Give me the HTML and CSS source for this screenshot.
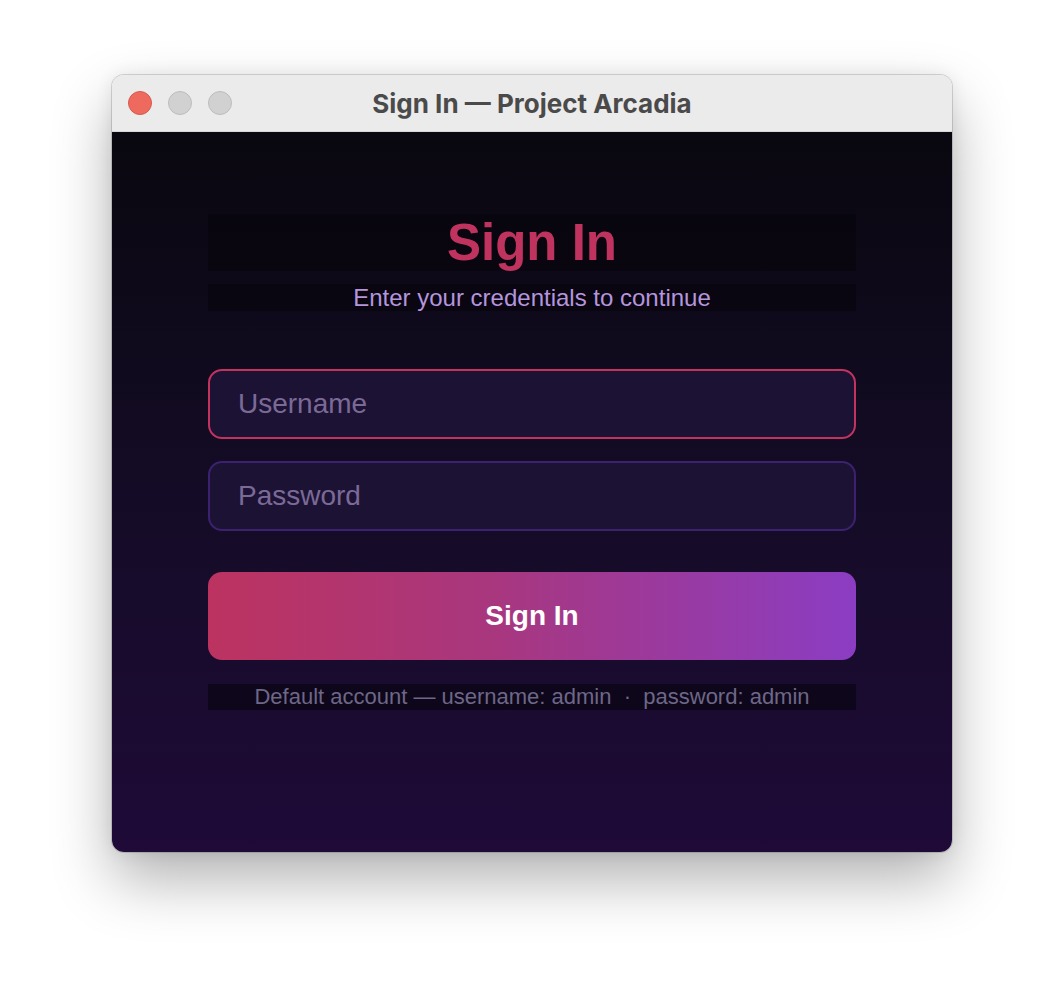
FILE: index.html
```html
<!DOCTYPE html>
<html lang="en">
<head>
<meta charset="utf-8">
<title>Sign In — Project Arcadia</title>
<link rel="stylesheet" href="styles.css">
</head>
<body>
<div class="window">
  <div class="titlebar">
    <div class="lights">
      <span class="light red"></span>
      <span class="light gray"></span>
      <span class="light gray"></span>
    </div>
    <div class="title">Sign In — Project Arcadia</div>
  </div>
  <div class="content">
    <div class="form">
      <h1 class="heading">Sign In</h1>
      <p class="subtitle">Enter your credentials to continue</p>
      <div class="fields">
        <input class="field focused" type="text" placeholder="Username">
        <input class="field" type="password" placeholder="Password">
      </div>
      <button class="submit" type="button">Sign In</button>
      <p class="hint">Default account — username: admin &nbsp;·&nbsp; password: admin</p>
    </div>
  </div>
</div>
</body>
</html>
```

FILE: styles.css
```css
html, body {
  margin: 0;
  padding: 0;
  background: #ffffff;
}
body {
  font-family: "Liberation Sans", Arial, sans-serif;
  min-height: 1000px;
  padding-top: 75px;
  box-sizing: border-box;
}
.window {
  width: 840px;
  margin: 0 auto;
  border-radius: 12px;
  overflow: hidden;
  box-shadow: 0 28px 60px rgba(0, 0, 0, 0.30), 0 0 18px rgba(0, 0, 0, 0.08), 0 0 0 1px rgba(0, 0, 0, 0.14);
}
.titlebar {
  height: 56px;
  background: #ebebeb;
  border-bottom: 1px solid #d8d8d8;
  display: flex;
  align-items: center;
  position: relative;
}
.lights {
  display: flex;
  gap: 16px;
  padding-left: 16px;
}
.light {
  width: 22px;
  height: 22px;
  border-radius: 50%;
  display: block;
}
.light.red {
  background: #ee6a5f;
  border: 1px solid #d6594f;
}
.light.gray {
  background: #d1d1d1;
  border: 1px solid #bdbdbd;
}
.title {
  position: absolute;
  left: 0;
  right: 0;
  text-align: center;
  font-family: Inter, "Liberation Sans", sans-serif;
  font-weight: 700;
  font-size: 26px;
  color: #4a4a4a;
  pointer-events: none;
}
.content {
  height: 720px;
  background: linear-gradient(180deg, #09070f 0%, #140c26 50%, #1f0a38 100%);
  padding-top: 82px;
  box-sizing: border-box;
}
.form {
  width: 648px;
  margin: 0 auto;
  display: flex;
  flex-direction: column;
}
.heading {
  margin: 0;
  font-size: 51px;
  line-height: 57px;
  font-weight: 700;
  color: #c0335f;
  text-align: center;
  background: rgba(0, 0, 0, 0.3);
}
.subtitle {
  margin: 13px 0 0;
  font-size: 24px;
  line-height: 27px;
  color: #b595dc;
  text-align: center;
  background: rgba(0, 0, 0, 0.3);
}
.fields {
  margin-top: 58px;
  display: flex;
  flex-direction: column;
  gap: 22px;
}
.field {
  height: 70px;
  box-sizing: border-box;
  border: 2px solid #3c2170;
  border-radius: 14px;
  background: #1c1233;
  padding: 0 28px;
  font-family: "Liberation Sans", Arial, sans-serif;
  font-size: 28px;
  color: #d8cdee;
  outline: none;
}
.field.focused {
  border-color: #c2335f;
}
.field::placeholder {
  color: #7b6a97;
}
.submit {
  margin-top: 41px;
  height: 88px;
  border: none;
  border-radius: 14px;
  background: linear-gradient(90deg, #bc3360 0%, #a8377f 45%, #8b3dc3 100%);
  color: #ffffff;
  font-family: "Liberation Sans", Arial, sans-serif;
  font-size: 28px;
  font-weight: 700;
  cursor: pointer;
}
.hint {
  margin: 24px 0 0;
  font-size: 22px;
  line-height: 26px;
  color: #6d6788;
  text-align: center;
  background: rgba(0, 0, 0, 0.45);
}
```
